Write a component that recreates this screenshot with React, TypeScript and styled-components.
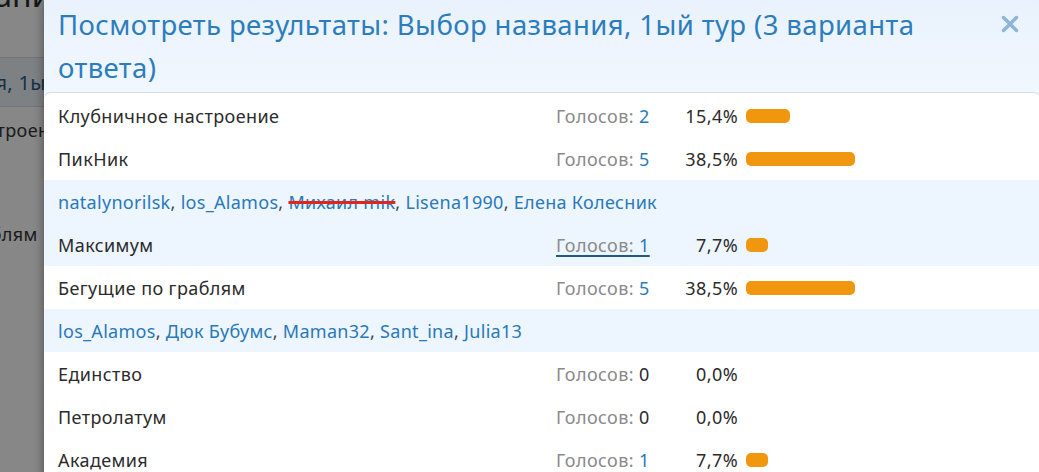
import { createGlobalStyle, styled } from "styled-components";

const GlobalStyle = createGlobalStyle`
  html, body {
    margin: 0;
    padding: 0;
    overflow: hidden;
    background: #ffffff;
    font-family: "Noto Sans", "Open Sans", sans-serif;
  }
`;

type Option = {
  title: string;
  votes: number;
  voters?: { name: string; removed?: boolean }[];
  hovered?: boolean;
};

const TOTAL = 13;

const options: Option[] = [
  { title: "Клубничное настроение", votes: 2 },
  {
    title: "ПикНик",
    votes: 5,
    voters: [
      { name: "natalynorilsk" },
      { name: "los_Alamos" },
      { name: "Михаил mik", removed: true },
      { name: "Lisena1990" },
      { name: "Елена Колесник" },
    ],
  },
  { title: "Максимум", votes: 1, hovered: true },
  {
    title: "Бегущие по граблям",
    votes: 5,
    voters: [
      { name: "los_Alamos" },
      { name: "Дюк Бубумс" },
      { name: "Maman32" },
      { name: "Sant_ina" },
      { name: "Julia13" },
    ],
  },
  { title: "Единство", votes: 0 },
  { title: "Петролатум", votes: 0 },
  { title: "Академия", votes: 1 },
];

/* background page, scrolled sideways */
const Page = styled.div`
  width: 100vw;
  height: 100vh;
  overflow: hidden;
`;

const PageInner = styled.div`
  margin-left: -170px;
  margin-top: -24px;
  width: 900px;
  color: #333;
`;

const PageTitle = styled.h1`
  margin: 0;
  padding-left: 40px;
  font-size: 32px;
  font-weight: 400;
  line-height: 38px;
  color: #2a2a2a;
`;

const PageMeta = styled.div`
  font-size: 14px;
  line-height: 20px;
  padding: 15px 0 8px 164px;
  color: #666;
`;

const PageTab = styled.div`
  border-top: 1px solid #d5dbe2;
  border-bottom: 1px solid #d5dbe2;
  background: #eef3f8;
  height: 48px;
  display: flex;
  align-items: center;
  padding-left: 12px;
  font-size: 20px;
  letter-spacing: 0.3px;
  color: #2b5f8c;
`;

const PageRow = styled.div<{ $tall?: boolean }>`
  height: ${(p) => (p.$tall ? 54 : 46)}px;
  display: flex;
  align-items: center;
  font-size: 18px;
  letter-spacing: 0.4px;
  padding-left: 20px;
`;

/* overlay */
const Backdrop = styled.div`
  position: fixed;
  inset: 0;
  background: rgba(0, 0, 0, 0.47);
`;

const Modal = styled.div`
  position: fixed;
  top: 0;
  left: 44px;
  width: 996px;
  bottom: -40px;
  background: #ecf4fd;
  box-shadow: 0 0 10px rgba(0, 0, 0, 0.45);
  display: flex;
  flex-direction: column;
`;

const Header = styled.div`
  display: flex;
  align-items: flex-start;
  gap: 20px;
  padding: 3px 20px 3px 14px;
  background: linear-gradient(#e9f2fc, #f1f7fe);
`;

const Title = styled.h2`
  flex: 1;
  margin: 0;
  font-size: 27.5px;
  letter-spacing: 0.4px;
  font-weight: 400;
  line-height: 43px;
  color: #2d7dbd;
`;

const Close = styled.button`
  border: 0;
  background: none;
  padding: 0;
  margin-top: 11px;
  width: 20px;
  height: 20px;
  cursor: pointer;
  display: flex;
  align-items: center;
  justify-content: center;
`;

const Body = styled.div`
  flex: 1;
  background: #ffffff;
  border-top: 1px solid #d6dde4;
  border-radius: 7px 7px 0 0;
  padding-top: 1px;
`;

const Row = styled.div<{ $hovered?: boolean }>`
  display: grid;
  grid-template-columns: 498px 124px 58px 1fr;
  align-items: center;
  height: 43px;
  padding-left: 14px;
  font-size: 18px;
  letter-spacing: 0.4px;
  color: #2b2b2b;
  background: ${(p) => (p.$hovered ? "#edf5fe" : "transparent")};
`;

const Votes = styled.span<{ $hovered?: boolean }>`
  color: #8a8a8a;
  white-space: nowrap;
  ${(p) =>
    p.$hovered &&
    `text-decoration: underline; text-decoration-color: #1f5a86; text-decoration-thickness: 2px; text-underline-offset: 3px;`}
`;

const Count = styled.span<{ $zero?: boolean }>`
  color: ${(p) => (p.$zero ? "#2b2b2b" : "#2a7ab8")};
`;

const Percent = styled.span`
  text-align: right;
  white-space: nowrap;
`;

const Bar = styled.span`
  display: block;
  height: 14px;
  margin-left: 8px;
  border-radius: 5px;
  background: #f1960f;
`;

const Voters = styled.div`
  display: flex;
  align-items: center;
  height: 43px;
  padding-left: 14px;
  font-size: 18px;
  letter-spacing: 0.3px;
  color: #444;
  background: #edf5fe;
  white-space: pre;
`;

const Voter = styled.a<{ $removed?: boolean }>`
  color: #2a79b9;
  text-decoration: ${(p) => (p.$removed ? "line-through" : "none")};
  text-decoration-color: #e1251b;
  text-decoration-thickness: 3px;
`;

function formatPercent(votes: number) {
  return ((votes / TOTAL) * 100).toFixed(1).replace(".", ",") + "%";
}

export default function App() {
  return (
    <>
      <GlobalStyle />
      <Page>
        <PageInner>
          <PageTitle>Голосование</PageTitle>
          <PageMeta>1</PageMeta>
          <PageTab>Выбор названия, 1ый тур</PageTab>
          <PageRow>Клубничное настроение</PageRow>
          <PageRow $tall>ПикНик</PageRow>
          <PageRow $tall>Бегущие по граблям</PageRow>
        </PageInner>
      </Page>
      <Backdrop />
      <Modal>
        <Header>
          <Title>
            Посмотреть результаты: Выбор названия, 1ый тур (3 варианта ответа)
          </Title>
          <Close aria-label="Закрыть">
            <svg width="18" height="18" viewBox="0 0 18 18">
              <path
                d="M2.5 2.5 L15.5 15.5 M15.5 2.5 L2.5 15.5"
                stroke="#8cb5d9"
                strokeWidth="3.4"
                strokeLinecap="round"
              />
            </svg>
          </Close>
        </Header>
        <Body>
          {options.map((o) => (
            <div key={o.title}>
              <Row $hovered={o.hovered}>
                <span>{o.title}</span>
                <span>
                  <Votes $hovered={o.hovered}>
                    Голосов: <Count $zero={o.votes === 0}>{o.votes}</Count>
                  </Votes>
                </span>
                <Percent>{formatPercent(o.votes)}</Percent>
                <span>
                  {o.votes > 0 && (
                    <Bar style={{ width: (o.votes / TOTAL) * 283 }} />
                  )}
                </span>
              </Row>
              {o.voters && (
                <Voters>
                  {o.voters.map((v, i) => (
                    <span key={v.name}>
                      <Voter $removed={v.removed}>{v.name}</Voter>
                      {i < o.voters!.length - 1 ? ", " : ""}
                    </span>
                  ))}
                </Voters>
              )}
            </div>
          ))}
        </Body>
      </Modal>
    </>
  );
}
